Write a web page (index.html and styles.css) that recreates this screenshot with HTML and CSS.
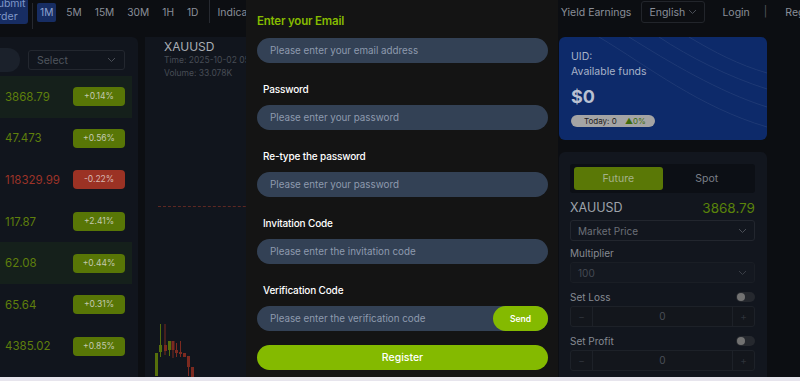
FILE: index.html
```html
<!DOCTYPE html>
<html lang="en">
<head>
<meta charset="utf-8">
<title>Register</title>
<link rel="stylesheet" href="styles.css">
</head>
<body>
<div class="app">
  <header class="topbar">
    <div class="tb-left">
      <button class="submit">Submit<br>order</button>
      <span class="vdiv"></span>
      <nav class="tf">
        <span class="tf-item active">1M</span>
        <span class="tf-item">5M</span>
        <span class="tf-item">15M</span>
        <span class="tf-item">30M</span>
        <span class="tf-item">1H</span>
        <span class="tf-item">1D</span>
      </nav>
      <span class="vdiv vdiv2"></span>
      <span class="tb-link">Indicators</span>
    </div>
    <div class="tb-right">
      <span class="tb-link">Gold Yield Earnings</span>
      <div class="lang">English
        <svg class="chev" width="9" height="6" viewBox="0 0 9 6"><path d="M1 1l3.5 3.5L8 1" fill="none" stroke="#4a4e56" stroke-width="1"/></svg>
      </div>
      <span class="tb-link login">Login</span>
      <span class="sep">|</span>
      <span class="tb-link">Register</span>
    </div>
  </header>

  <main class="main">
    <section class="market">
      <div class="market-top">
        <div class="search"></div>
        <div class="select">Select
          <svg class="chev" width="9" height="6" viewBox="0 0 9 6"><path d="M1 1l3.5 3.5L8 1" fill="none" stroke="#4a4e56" stroke-width="1"/></svg>
        </div>
      </div>
      <ul class="rows">
        <li class="row hl"><span class="price up">3868.79</span><span class="badge up">+0.14%</span></li>
        <li class="row"><span class="price up">47.473</span><span class="badge up">+0.56%</span></li>
        <li class="row"><span class="price down">118329.99</span><span class="badge down">-0.22%</span></li>
        <li class="row"><span class="price up">117.87</span><span class="badge up">+2.41%</span></li>
        <li class="row hl"><span class="price up">62.08</span><span class="badge up">+0.44%</span></li>
        <li class="row"><span class="price up">65.64</span><span class="badge up">+0.31%</span></li>
        <li class="row"><span class="price up">4385.02</span><span class="badge up">+0.85%</span></li>
      </ul>
    </section>

    <section class="chart">
      <div class="chart-info">
        <div class="sym">XAUUSD</div>
        <div class="meta">Time: 2025-10-02 05:56</div>
        <div class="meta">Volume: 33.078K</div>
      </div>
      <div class="priceline"></div>
      <svg class="candles" width="100" height="60" viewBox="0 0 100 60">
        <g fill="#566f0b" stroke="#566f0b" stroke-width="1">
          <rect x="10" y="31" width="3" height="23" stroke="none"/>
          <line x1="15.5" y1="2" x2="15.5" y2="35"/>
          <rect x="14" y="23" width="3" height="7" stroke="none"/>
          <line x1="24.5" y1="19" x2="24.5" y2="34"/>
          <rect x="23" y="19" width="3" height="9" stroke="none"/>
        </g>
        <g fill="#7c2a20" stroke="#7c2a20" stroke-width="1">
          <line x1="20" y1="2" x2="20" y2="33"/>
          <rect x="19" y="23" width="3" height="6" stroke="none"/>
          <line x1="28" y1="19" x2="28" y2="36"/>
          <rect x="26.5" y="19" width="3" height="9" stroke="none"/>
          <line x1="31.5" y1="21" x2="31.5" y2="35"/>
          <rect x="30" y="28" width="3" height="3" stroke="none"/>
          <line x1="35.5" y1="19" x2="35.5" y2="35"/>
          <rect x="34" y="30" width="3" height="2" stroke="none"/>
          <rect x="38" y="31" width="3" height="4" stroke="none"/>
          <line x1="43.5" y1="34" x2="43.5" y2="54"/>
          <rect x="42" y="34" width="3" height="11" stroke="none"/>
          <rect x="46" y="45" width="3" height="10" stroke="none"/>
        </g>
      </svg>
    </section>

    <aside class="side">
      <div class="funds">
        <svg class="funds-deco" width="208" height="103" viewBox="0 0 208 103">
          <g fill="none" stroke="#ffffff" stroke-opacity="0.07" stroke-width="1">
            <path d="M40 0 C 90 30, 140 70, 208 90"/>
            <path d="M70 0 C 110 25, 160 55, 208 70"/>
            <path d="M100 0 C 130 20, 170 40, 208 52"/>
            <path d="M130 0 C 155 15, 180 28, 208 36"/>
          </g>
        </svg>
        <div class="uid">UID:</div>
        <div class="avail">Available funds</div>
        <div class="amount">$0</div>
        <div class="today">Today: 0 <span class="today-up">&#9650;0%</span></div>
      </div>

      <div class="trade">
        <div class="tabs">
          <span class="tab active">Future</span>
          <span class="tab">Spot</span>
        </div>
        <div class="pair"><span class="pair-name">XAUUSD</span><span class="pair-price">3868.79</span></div>
        <div class="field-sel">Market Price
          <svg class="chev" width="9" height="6" viewBox="0 0 9 6"><path d="M1 1l3.5 3.5L8 1" fill="none" stroke="#4a4e56" stroke-width="1"/></svg>
        </div>
        <div class="t-label">Multiplier</div>
        <div class="field-sel dark">100
          <svg class="chev" width="9" height="6" viewBox="0 0 9 6"><path d="M1 1l3.5 3.5L8 1" fill="none" stroke="#3a3e46" stroke-width="1"/></svg>
        </div>
        <div class="t-label row-sw">Set Loss<span class="toggle"></span></div>
        <div class="stepper"><span class="st-btn">&minus;</span><span class="st-val">0</span><span class="st-btn">+</span></div>
        <div class="t-label row-sw">Set Profit<span class="toggle"></span></div>
        <div class="stepper"><span class="st-btn">&minus;</span><span class="st-val">0</span><span class="st-btn">+</span></div>
      </div>
    </aside>
  </main>

  <div class="modal">
    <div class="m-title">Enter your Email</div>
    <div class="m-input">Please enter your email address</div>
    <div class="m-label">Password</div>
    <div class="m-input">Please enter your password</div>
    <div class="m-label">Re-type the password</div>
    <div class="m-input">Please enter your password</div>
    <div class="m-label">Invitation Code</div>
    <div class="m-input">Please enter the invitation code</div>
    <div class="m-label">Verification Code</div>
    <div class="m-input m-code"><span>Please enter the verification code</span><button class="send">Send</button></div>
    <button class="register">Register</button>
  </div>
</div>
</body>
</html>
```

FILE: styles.css
```css
* { box-sizing: border-box; }
html, body {
  margin: 0;
  padding: 0;
}
body {
  background: #e7e5ed;
  font-family: "Inter", "Noto Sans", sans-serif;
  overflow: hidden;
  width: 800px;
  height: 381px;
}
.app {
  position: relative;
  width: 800px;
  height: 377px;
  background: #0c0e12;
  overflow: hidden;
}

/* ---------- top bar ---------- */
.topbar {
  width: 826px;
  height: 36px;
  display: flex;
  justify-content: space-between;
  align-items: flex-start;
  background: #0c0e12;
  font-size: 10.5px;
  color: #8a8f99;
}
.tb-left, .tb-right {
  display: flex;
  align-items: flex-start;
}
.submit {
  margin: -5px 0 0 -13px;
  width: 41px;
  height: 29px;
  padding: 1px 0 0 4px;
  border: 0;
  border-radius: 0 0 3px 0;
  background: #172d63;
  color: #7f97c9;
  font: 10.5px/13px "Inter", sans-serif;
  text-align: left;
  white-space: nowrap;
  overflow: hidden;
}
.vdiv {
  width: 1px;
  height: 26px;
  margin: 3px 4px 0;
  background: #262930;
}
.vdiv2 { margin: 0 7px 0 8px; height: 23px; }
.tf {
  display: flex;
  gap: 7px;
  font-size: 10.2px;
}
.tf-item {
  height: 19px;
  margin-top: 3px;
  padding: 0 3px;
  line-height: 19px;
  border-radius: 2px;
}
.tf-item.active {
  background: #172d63;
  color: #8ea2cf;
}
.tb-link {
  line-height: 19px;
  margin-top: 3px;
  white-space: nowrap;
}
.lang {
  display: flex;
  align-items: center;
  justify-content: space-between;
  width: 64px;
  height: 22px;
  margin: 1px 0 0 10px;
  padding: 0 7px 0 7px;
  border: 1px solid #22252b;
  border-radius: 3px;
}
.login { margin-left: 17px; }
.sep {
  margin: 2px 18px 0 14px;
  line-height: 19px;
  color: #54585f;
}

/* ---------- main ---------- */
.main {
  display: flex;
  height: 341px;
  padding-top: 1px;
}
.market {
  width: 138px;
  background: #11151d;
  border-radius: 0 6px 0 0;
}
.market-top {
  display: flex;
  align-items: center;
  gap: 8px;
  padding-top: 7px;
  height: 39px;
}
.search {
  width: 20px;
  height: 24px;
  background: #1b212b;
  border-radius: 0 12px 12px 0;
}
.select {
  display: flex;
  align-items: center;
  justify-content: space-between;
  width: 97px;
  height: 20px;
  padding: 0 8px;
  border: 1px solid #23272f;
  border-radius: 3px;
  font-size: 10.5px;
  color: #50555e;
}
.rows {
  list-style: none;
  margin: 0;
  padding: 0;
}
.row {
  display: flex;
  align-items: center;
  justify-content: space-between;
  width: 132px;
  height: 41.6px;
  padding: 0 7px 0 5px;
}
.row.hl { background: #15201b; }
.price { font-size: 11.5px; }
.price.up { color: #5f7f0c; }
.price.down { color: #9c3328; }
.badge {
  width: 52px;
  height: 19px;
  border-radius: 4px;
  font-size: 8.5px;
  line-height: 19px;
  text-align: center;
  color: #c3c9b0;
}
.badge.up { background: #587606; }
.badge.down { background: #9b3224; color: #d8b9b3; }

.chart {
  position: relative;
  width: 410px;
  margin-left: 7px;
  background: #11151d;
}
.chart-info { padding: 2px 0 0 19px; }
.sym {
  font-size: 12px;
  color: #a9adb4;
  line-height: 15px;
}
.meta {
  font-size: 8.5px;
  color: #474c55;
  line-height: 13px;
  white-space: nowrap;
}
.priceline {
  margin: 126px 0 0 13px;
  height: 0;
  border-top: 1px dashed #5e2822;
}
.candles {
  display: block;
  margin-top: 115px;
}

.side {
  width: 208px;
  margin-left: 4px;
}
.funds {
  position: relative;
  height: 103px;
  padding: 13px 12px 0;
  border-radius: 6px;
  background: #0d2a6a;
  color: #a7b2c8;
  font-size: 10.5px;
  overflow: hidden;
}
.funds-deco { position: absolute; left: 0; top: 0; }
.uid { line-height: 14px; }
.avail { line-height: 14px; margin-top: 1px; }
.amount {
  margin-top: 8px;
  font-size: 18px;
  font-weight: 700;
  color: #b9c1d1;
  line-height: 20px;
}
.today {
  display: inline-block;
  margin-top: 8px;
  width: 84px;
  height: 12px;
  padding-left: 13px;
  border-radius: 6px;
  background: #a4a4a4;
  color: #1e1e1e;
  font-size: 8px;
  line-height: 12px;
  white-space: nowrap;
}
.today-up { margin-left: 6px; color: #3f6c0c; font-size: 8px; }

.trade {
  margin-top: 12px;
  height: 230px;
  padding: 12px 12px 0 11px;
  border-radius: 6px;
  background: #12161e;
}
.tabs {
  display: flex;
  height: 29px;
  padding: 3px 4px;
  background: #0c0f15;
  border-radius: 3px;
}
.tab {
  flex: 1;
  text-align: center;
  line-height: 23px;
  font-size: 10.5px;
  color: #7a7f88;
  border-radius: 3px;
}
.tab.active { background: #5a7806; color: #a5b28a; }
.pair {
  display: flex;
  justify-content: space-between;
  align-items: center;
  margin-top: 7px;
  line-height: 16px;
}
.pair-name { font-size: 12.5px; color: #9fa3ab; }
.pair-price { font-size: 13.5px; color: #5a840a; }
.field-sel {
  display: flex;
  align-items: center;
  justify-content: space-between;
  height: 21px;
  margin-top: 4px;
  padding: 0 7px;
  border: 1px solid #22262e;
  border-radius: 3px;
  font-size: 10px;
  color: #6c7078;
}
.field-sel.dark {
  background: #141820;
  color: #454a53;
  border-color: #1a1e25;
  margin-top: 3px;
}
.t-label {
  margin-top: 6px;
  font-size: 10px;
  color: #868a92;
  line-height: 12px;
}
.row-sw {
  display: flex;
  justify-content: space-between;
  align-items: center;
  margin-top: 8px;
}
.toggle {
  position: relative;
  width: 19px;
  height: 10px;
  border-radius: 5px;
  background: #25282e;
}
.toggle::after {
  content: "";
  position: absolute;
  left: 1px;
  top: 1px;
  width: 8px;
  height: 8px;
  border-radius: 50%;
  background: #727272;
}
.stepper {
  display: grid;
  grid-template-columns: 22px 1fr 22px;
  height: 21px;
  margin-top: 3px;
  border: 1px solid #1d2128;
  border-radius: 3px;
  background: #13161c;
  font-size: 10px;
  line-height: 19px;
  text-align: center;
  color: #4a4f57;
}
.st-btn { color: #2e323a; }
.st-btn:first-child { border-right: 1px solid #1d2128; }
.st-btn:last-child { border-left: 1px solid #1d2128; }

/* ---------- modal ---------- */
.modal {
  position: absolute;
  left: 246px;
  top: 0;
  width: 312px;
  height: 377px;
  padding: 11px 10px 0 11px;
  background: #141414;
}
.m-title {
  font-size: 11.5px;
  font-weight: 600;
  letter-spacing: -0.2px;
  color: #86bc00;
  line-height: 21px;
}
.m-input {
  display: flex;
  align-items: center;
  justify-content: space-between;
  height: 25px;
  margin-top: 6px;
  padding-left: 13px;
  border-radius: 13px;
  background: #334155;
  font-size: 9.8px;
  color: #8e9aae;
}
.m-label {
  margin: 18px 0 0 6px;
  font-size: 10px;
  font-weight: 500;
  letter-spacing: -0.15px;
  line-height: 16px;
  color: #ffffff;
}
.m-label + .m-input { margin-top: 8px; }
.send {
  width: 55px;
  height: 25px;
  border: 0;
  border-radius: 13px;
  background: #84ba00;
  color: #ffffff;
  font: 600 8.5px "Inter", sans-serif;
}
.register {
  display: block;
  width: 100%;
  height: 25px;
  margin-top: 14px;
  border: 0;
  border-radius: 13px;
  background: #84ba00;
  color: #ffffff;
  font: 500 10.5px "Inter", sans-serif;
}
```
